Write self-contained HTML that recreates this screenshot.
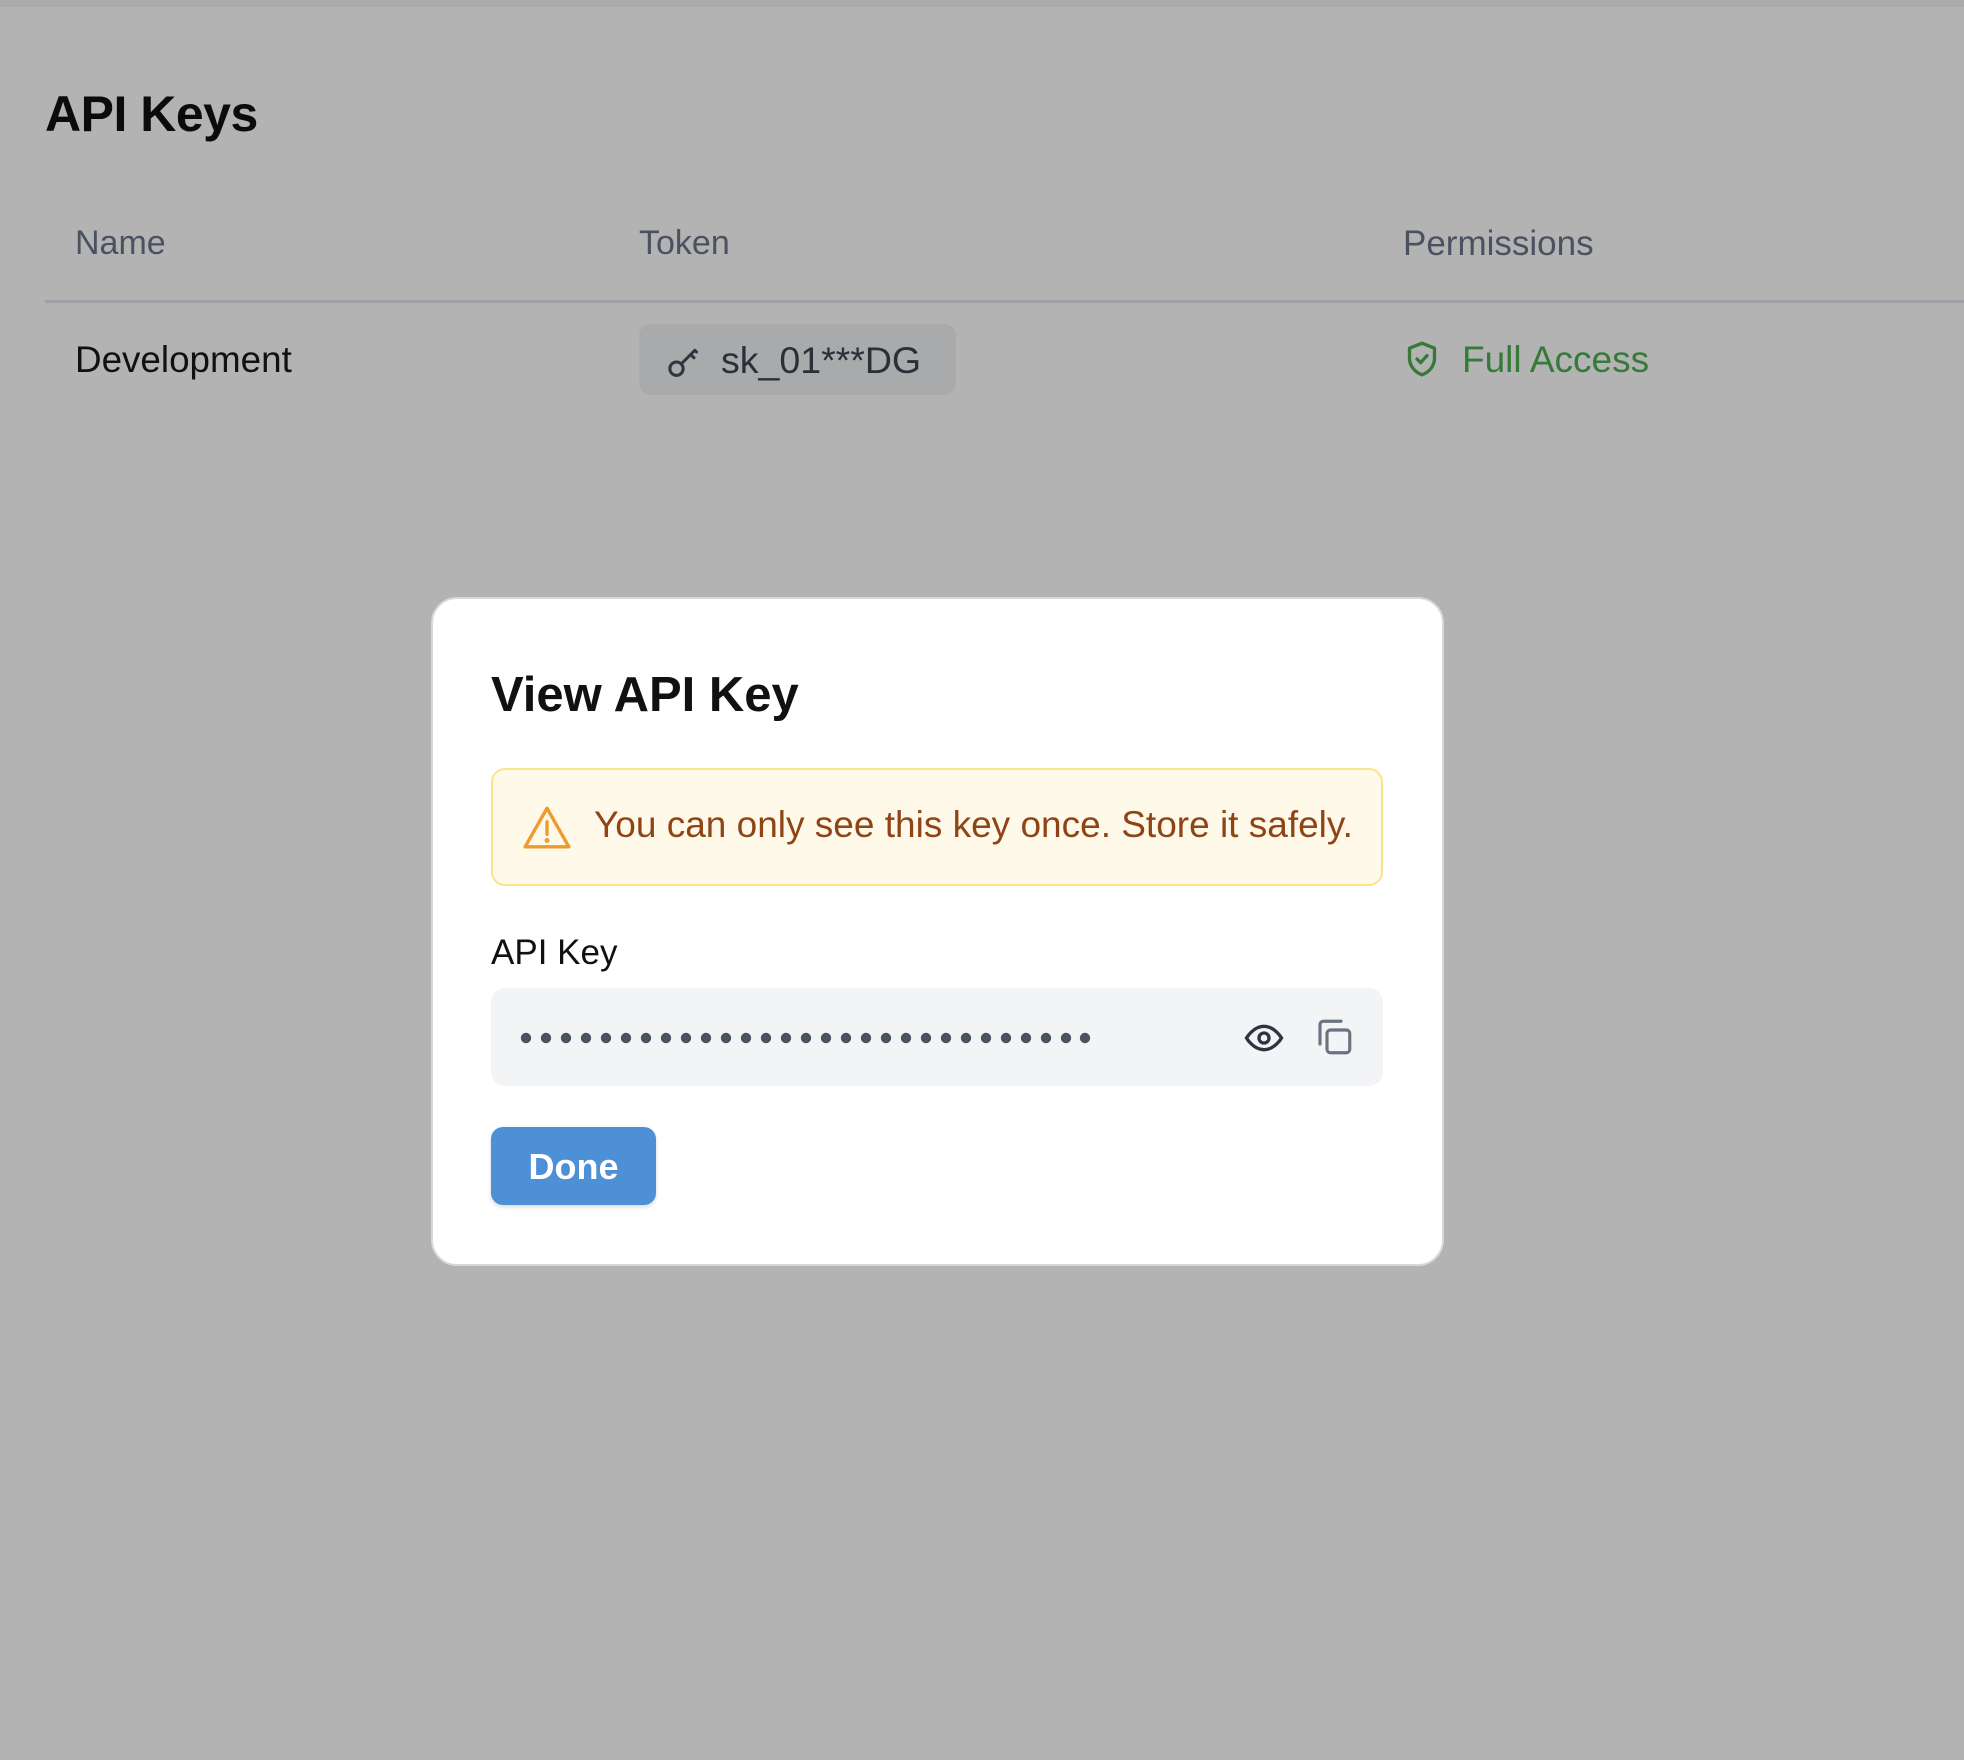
<!DOCTYPE html>
<html><head><meta charset="utf-8"><style>
*{margin:0;padding:0;box-sizing:border-box}
html,body{width:1964px;height:1760px;overflow:hidden;background:#b3b3b3;font-family:"Liberation Sans",Arial,sans-serif}
.a{position:absolute;white-space:nowrap}
</style></head><body>
<div class="a" style="left:0;top:0;width:1964px;height:7px;background:#aaaaaa"></div>
<div class="a" style="left:45px;top:85px;font-size:50px;font-weight:700;color:#0b0b0b;letter-spacing:-0.5px">API Keys</div>
<div class="a" style="left:75px;top:224px;font-size:34px;color:#4a5260">Name</div>
<div class="a" style="left:639px;top:224px;font-size:34px;color:#4a5260">Token</div>
<div class="a" style="left:1403px;top:224px;font-size:35px;color:#4a5260">Permissions</div>
<div class="a" style="left:45px;top:300px;width:1919px;height:3px;background:#9ea2a7"></div>
<div class="a" style="left:75px;top:339px;font-size:36.8px;color:#111">Development</div>
<div class="a" style="left:639px;top:324px;width:317px;height:71px;border-radius:12px;background:#a9aaac"></div>
<svg class="a" style="left:664px;top:342px" width="40" height="40" viewBox="0 0 24 24" fill="none" stroke="#2f3540" stroke-width="1.8" stroke-linecap="round"><circle cx="7.5" cy="16" r="4"/><path d="M10.5 13l8-8M16 7.5l2 2M18.5 5l1 1"/></svg>
<div class="a" style="left:721px;top:339px;font-size:37.5px;color:#2a2f38">sk_01***DG</div>
<svg class="a" style="left:1402px;top:339px" width="40" height="40" viewBox="0 0 24 24" fill="none" stroke="#367a3a" stroke-width="2" stroke-linecap="round" stroke-linejoin="round"><path d="M12 2.5l7.5 3v6c0 5-3.5 8.5-7.5 10-4-1.5-7.5-5-7.5-10v-6z"/><path d="M9 12l2.2 2.2L15 10"/></svg>
<div class="a" style="left:1462px;top:339px;font-size:37px;color:#367a3a">Full Access</div>

<div class="a" style="left:431px;top:597px;width:1013px;height:669px;background:#fff;border-radius:26px;border:2px solid #d8d8d8"></div>
<div class="a" style="left:491px;top:667px;font-size:49px;font-weight:700;color:#111">View API Key</div>
<div class="a" style="left:491px;top:768px;width:892px;height:118px;background:#fef9e8;border:2px solid #fbe38a;border-radius:14px"></div>
<svg class="a" style="left:522px;top:804px" width="50" height="46" viewBox="0 0 24 22" fill="none" stroke="#ef9a2f" stroke-width="1.6" stroke-linecap="round" stroke-linejoin="round"><path d="M12 2L1.5 20.5h21z"/><path d="M12 8.5v6"/><circle cx="12" cy="17.5" r="0.4" fill="#ef9a2f"/></svg>
<div class="a" style="left:594px;top:804px;font-size:37px;color:#8f4416">You can only see this key once. Store it safely.</div>
<div class="a" style="left:491px;top:933px;font-size:35px;color:#111">API Key</div>
<div class="a" style="left:491px;top:988px;width:892px;height:98px;background:#f3f4f6;border-radius:14px"></div>
<svg class="a" style="left:516px;top:1028px" width="580" height="20" fill="#4b5260">
<g id="d"></g>
<circle cx="10" cy="10" r="5.2"/><circle cx="30" cy="10" r="5.2"/><circle cx="50" cy="10" r="5.2"/><circle cx="70" cy="10" r="5.2"/><circle cx="90" cy="10" r="5.2"/><circle cx="110" cy="10" r="5.2"/><circle cx="130" cy="10" r="5.2"/><circle cx="150" cy="10" r="5.2"/><circle cx="170" cy="10" r="5.2"/><circle cx="190" cy="10" r="5.2"/><circle cx="210" cy="10" r="5.2"/><circle cx="230" cy="10" r="5.2"/><circle cx="250" cy="10" r="5.2"/><circle cx="270" cy="10" r="5.2"/><circle cx="290" cy="10" r="5.2"/><circle cx="310" cy="10" r="5.2"/><circle cx="330" cy="10" r="5.2"/><circle cx="350" cy="10" r="5.2"/><circle cx="370" cy="10" r="5.2"/><circle cx="390" cy="10" r="5.2"/><circle cx="410" cy="10" r="5.2"/><circle cx="430" cy="10" r="5.2"/><circle cx="450" cy="10" r="5.2"/><circle cx="470" cy="10" r="5.2"/><circle cx="490" cy="10" r="5.2"/><circle cx="510" cy="10" r="5.2"/><circle cx="530" cy="10" r="5.2"/><circle cx="550" cy="10" r="5.2"/><circle cx="569" cy="10" r="5.2"/>
</svg>
<svg class="a" style="left:1244px;top:1018px" width="40" height="40" viewBox="0 0 24 24" fill="none" stroke="#2f3540" stroke-width="2"><path d="M1.5 12s4-7 10.5-7 10.5 7 10.5 7-4 7-10.5 7S1.5 12 1.5 12z"/><circle cx="12" cy="12" r="3"/></svg>
<svg class="a" style="left:1312px;top:1016px" width="44" height="42" viewBox="0 0 24 24" fill="none" stroke="#6b7280" stroke-width="1.8" stroke-linecap="round" stroke-linejoin="round"><rect x="8" y="8" width="13" height="13" rx="2"/><path d="M4 16V5a2 2 0 0 1 2-2h10"/></svg>
<div class="a" style="left:491px;top:1127px;width:165px;height:78px;background:#4d90d6;border-radius:12px;box-shadow:0 2px 4px rgba(0,0,0,.15)"></div>
<div class="a" style="left:491px;top:1146px;width:165px;text-align:center;font-size:36px;font-weight:700;color:#fff">Done</div>
</body></html>
